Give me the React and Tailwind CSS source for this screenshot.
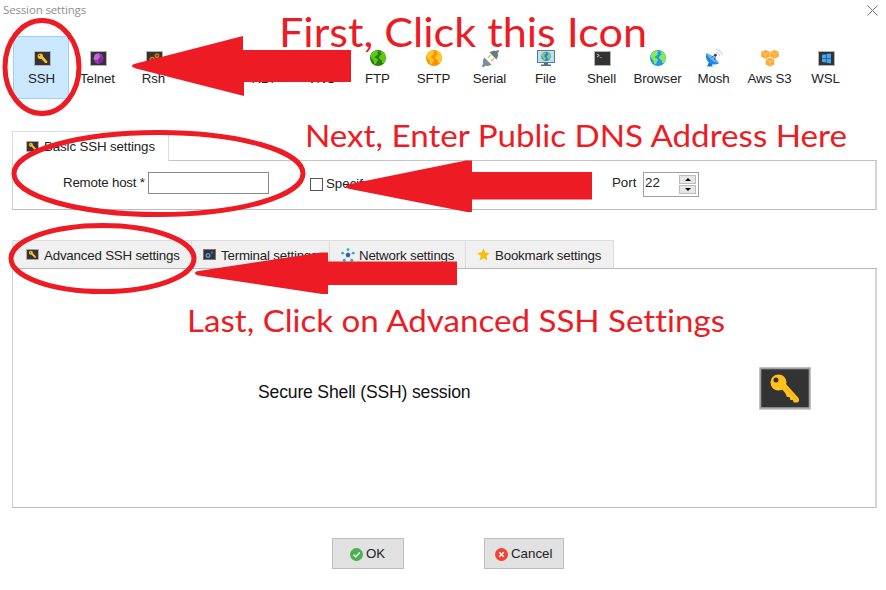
import React from "react";

const TERM = "#333333";

function KeyBox({ className }) {
  return (
    <svg className={className} viewBox="0 0 17 15">
      <rect x="0.5" y="0.5" width="16" height="14" fill={TERM} stroke="#b4b4b4" />
      <circle cx="6.3" cy="5.2" r="2.7" fill="#ffc11e" />
      <path d="M6.6 7 8.6 5 13.4 10.4 13 12 11.2 12Z" fill="#ffc11e" />
      <circle cx="5.5" cy="4.4" r="0.7" fill={TERM} />
    </svg>
  );
}

function DarkBox({ children }) {
  return (
    <svg className="h-[15px] w-[17px]" viewBox="0 0 17 15">
      <rect x="0.5" y="0.5" width="16" height="14" fill={TERM} stroke="#b4b4b4" />
      {children}
    </svg>
  );
}

function Globe({ sea, land }) {
  return (
    <svg className="h-4 w-4" viewBox="0 0 16 16">
      <circle cx="8" cy="8" r="8" fill={sea} />
      <path
        d="M1.2 4.2C2.6 1.8 4.6.6 6.8.2L8.4 1.4 7.4 3 8 4.4 5.8 6 4.4 7.6 7 8.4 8 10.2 6.6 12 6 14.6 4.2 13.4 3.4 10.6 1.6 8.6.5 6.6ZM10.4 1 12.6 1.4 14.8 3.8 15.9 7 15.4 10.4 13.6 13.4 12 12.8 11.8 10 9.8 9.2 9 7.2 10.2 5.2 12 4.2 10.8 3Z"
        fill={land}
      />
    </svg>
  );
}

const Gem = () => (
  <DarkBox>
    <path d="M8.5 2 12 3.4 13.6 7.5 12 11.4 8.5 13.2 5 11.4 3.6 7.5 5 3.4Z" fill="#9c3ab8" />
    <path d="M8.5 2 10 6 8 9 4.2 8.4 3.6 7.5 5 3.4Z" fill="#c06ad8" />
    <path d="M10 6 13.6 7.5 12 11.4 8.5 13.2 8 9Z" fill="#8424a2" />
  </DarkBox>
);

const Gears = () => (
  <DarkBox>
    <g fill="none" stroke="#e07b16" strokeWidth="1.5">
      <circle cx="6.2" cy="8.4" r="2" />
      <circle cx="11" cy="4.8" r="1.7" />
      <circle cx="11" cy="11" r="1.4" />
    </g>
  </DarkBox>
);

const Plug = () => (
  <svg className="h-[17px] w-[17px]" viewBox="0 0 17 17">
    <path d="M16.6.4 13 4M.4 16.6 4 13" stroke="#78909c" strokeWidth="2.6" />
    <path d="M7.6 2.6C10.6.2 13.2.4 14.9 2.1S16.6 6.6 14.4 9.4Z" fill="#607d8b" />
    <path d="M2.4 7.6 9.4 14.6C6.6 16.6 3.8 16.4 2.1 14.9S.4 10.4 2.4 7.6Z" fill="#78909c" />
    <path d="M8.6 5 6 7.8M12 8.4 9.2 11.2" stroke="#ffb74d" strokeWidth="1.6" />
  </svg>
);

const Monitor = () => (
  <svg className="h-4 w-[18px]" viewBox="0 0 18 16">
    <rect x="0.5" y="0.5" width="17" height="12" fill="#bbdefb" stroke="#607d8b" />
    <path d="M7 13H11V14.5H14V16H4V14.5H7Z" fill="#546e7a" />
    <circle cx="9" cy="6.4" r="4.7" fill="#1e88e5" />
    <path d="M5.5 3.3 8.6 2 9 3.5 7.2 5 7.6 7.2 9.2 8 7.8 10.3 6.2 9.4 5.7 7 4.4 6Z M10.2 2.3 12.9 4.2 13.4 7 12 9.8 10.6 8.4 9.8 6.2 11.4 4.8Z" fill="#9ccc45" />
  </svg>
);

const Shell = () => (
  <DarkBox>
    <path d="M3 3 5.2 4.5 3 6" fill="none" stroke="#dddddd" strokeWidth="0.9" />
    <path d="M5.6 6.5H8" stroke="#999999" strokeWidth="0.7" />
  </DarkBox>
);

const Dish = () => (
  <svg className="h-[18px] w-[18px]" viewBox="0 0 18 18">
    <path d="M4.5 12 2 17.5H7.5L7 13Z" fill="#1976d2" />
    <path d="M1.6 4.2C0 8 1.6 12 4.6 14S11 16 14 14.2Z" fill="#1e88e5" />
    <path d="M1.6 4.2C5 4.5 13 10.5 14 14.2 10 14 3.5 9.5 1.6 4.2Z" fill="#64b5f6" />
    <path d="M6.5 8.4 10.5 5.6 9.6 11" fill="none" stroke="#455a64" strokeWidth="1" />
    <circle cx="10.4" cy="6.2" r="1.4" fill="#37474f" />
    <path d="M11 3.4C13 3.6 14.2 5 14.4 7M11.4.8C14.8 1 16.8 3.2 17.2 6.4" fill="none" stroke="#a9d2f7" strokeWidth="1" />
  </svg>
);

function Cube({ x, y }) {
  return (
    <g transform={`translate(${x} ${y})`}>
      <path d="M4.5 0 8.8 1.8V6.8L4.5 8.8.2 6.8V1.8Z" fill="#ffab33" />
      <path d="M1.4 2.6 4.5 4 7.6 2.6M4.5 4V7.4" fill="none" stroke="#ffdba6" strokeWidth="0.6" />
    </g>
  );
}

const Cubes = () => (
  <svg className="h-[17px] w-[18px]" viewBox="0 0 18 17">
    <Cube x={0} y={0} />
    <Cube x={9} y={0} />
    <Cube x={4.5} y={7.8} />
  </svg>
);

const Windows = () => (
  <DarkBox>
    <path d="M4 3.8 7.9 3.2V7H4ZM8.5 3.1 13 2.4V7H8.5ZM4 7.6H7.9V11.6L4 11ZM8.5 7.6H13V12.4L8.5 11.7Z" fill="#42a5f5" />
  </DarkBox>
);

const Network = () => (
  <svg className="h-[14px] w-[14px]" viewBox="0 0 14 14">
    <path d="M7 7V1.5M7 7 1.5 5M7 7 12.5 5M7 7 3.5 12M7 7 10.5 12" stroke="#a6c4e8" strokeWidth="0.7" />
    <circle cx="7" cy="7" r="2.2" fill="#3f51b5" />
    <g fill="#16b8d4">
      <circle cx="7" cy="1.6" r="1.4" />
      <circle cx="1.6" cy="5.2" r="1.4" />
      <circle cx="12.3" cy="5.2" r="1.4" />
      <circle cx="3.2" cy="12.2" r="1.5" />
      <circle cx="10.8" cy="12.2" r="1.5" />
    </g>
  </svg>
);

const Star = () => (
  <svg className="h-[13px] w-[13px]" viewBox="0 0 13 13">
    <path d="M6.5.3 8.3 4.4 12.8 4.9 9.4 7.9 10.4 12.5 6.5 10.2 2.6 12.5 3.6 7.9.2 4.9 4.7 4.4Z" fill="#f4c20d" />
  </svg>
);

const TermGears = () => (
  <svg className="h-[11px] w-[13px]" viewBox="0 0 13 11">
    <rect x="0.5" y="0.5" width="12" height="10" fill={TERM} stroke="#777777" />
    <circle cx="5" cy="6.4" r="1.8" fill="none" stroke="#5b9be0" strokeWidth="1.4" />
    <circle cx="9" cy="3.6" r="1.2" fill="#4277b8" />
  </svg>
);

const sessions = [
  ["SSH", <KeyBox className="h-[15px] w-[17px]" />],
  ["Telnet", <Gem />],
  ["Rsh", <Gears />],
  ["Xdmcp", <DarkBox />],
  ["RDP", <DarkBox />],
  ["VNC", <DarkBox />],
  ["FTP", <Globe sea="#2e7d0e" land="#5ccb12" />],
  ["SFTP", <Globe sea="#ff8f00" land="#ffc928" />],
  ["Serial", <Plug />],
  ["File", <Monitor />],
  ["Shell", <Shell />],
  ["Browser", <Globe sea="#2196f3" land="#8bea4c" />],
  ["Mosh", <Dish />],
  ["Aws S3", <Cubes />],
  ["WSL", <Windows />],
];

function Tab({ icon, label, className }) {
  return (
    <div className={`flex h-7 items-center border-t border-r border-[#dcdcdc] bg-[#f0f0f0] ${className}`}>
      <span className="flex w-[18px] shrink-0 items-center">{icon}</span>
      <span className="pt-[2px] tracking-[-0.19px] whitespace-nowrap">{label}</span>
    </div>
  );
}

function Annotations() {
  return (
    <svg className="pointer-events-none absolute inset-0 h-[590px] w-[886px]" viewBox="0 0 886 590">
      <g fill="none" stroke="#ed1c24" strokeWidth="5">
        <ellipse cx="42" cy="67" rx="37" ry="46.5" />
        <ellipse cx="158.5" cy="173.5" rx="144.5" ry="41" />
        <ellipse cx="102.5" cy="258.5" rx="91.5" ry="33" />
      </g>
      <g fill="#ed1c24">
        <path d="M132 66Q132 64.6 136 63.6L243 36V50H351V82H244V96L136 68.4Q132 67.4 132 66Z" />
        <path d="M346 186.5Q346 184.8 350 184L466 160.4H472V172H592V199.5H472V212H467L350 189Q346 188.2 346 186.5Z" />
        <path d="M195 273Q195 271.5 198.5 271L321 252.5H328V261.5H457V285H328V294H322L198.5 275.5Q195 274.8 195 273Z" />
      </g>
      <g fill="#ed1c24" fontFamily="Lato, 'Open Sans', sans-serif" className="[font-variant-ligatures:none]">
        <text x="279" y="47" fontSize="40.5" textLength="368" lengthAdjust="spacingAndGlyphs">First, Click this Icon</text>
        <text x="305" y="147" fontSize="31.5" textLength="542" lengthAdjust="spacingAndGlyphs">Next, Enter Public DNS Address Here</text>
        <text x="187" y="332" fontSize="31.5" textLength="538" lengthAdjust="spacingAndGlyphs">Last, Click on Advanced SSH Settings</text>
      </g>
    </svg>
  );
}

export default function App() {
  return (
    <div className="relative flex h-[590px] w-[886px] flex-col overflow-hidden bg-white font-['Liberation_Sans',Arial,sans-serif] text-[13.3px] text-[#222]">
      <header className="flex h-9 shrink-0 items-start justify-between pr-[8px] pl-[3px]">
        <span className="mt-[2px] font-['Open_Sans','Noto_Sans',sans-serif] text-[11.5px] leading-4 tracking-[-0.15px] text-[#8f8f8f]">Session settings</span>
        <svg className="mt-[5px] h-[11px] w-[11px]" viewBox="0 0 11 11">
          <path d="M.5.5 10.5 10.5M10.5.5.5 10.5" stroke="#777" strokeWidth="1" />
        </svg>
      </header>

      <nav className="flex h-[63px] shrink-0 pl-[13px]">
        {sessions.map(([name, icon], i) => (
          <div
            key={name}
            className={`flex w-14 shrink-0 flex-col items-center border pt-[11px] ${i === 0 ? "border-[#99d1ff] bg-[#cce8ff]" : "border-transparent"}`}
          >
            <span className="flex h-5 items-center pl-[2px]">{icon}</span>
            <span className={`mt-[3px] pl-[1px] leading-4 whitespace-nowrap ${name === "Xdmcp" ? "tracking-[-1.4px]" : "tracking-[-0.1px]"}`}>{name}</span>
          </div>
        ))}
      </nav>

      <section className="mx-[12px] mt-8 flex h-[79px] w-[865px] shrink-0 flex-col">
        <div className="flex h-[30px] shrink-0">
          <div className="flex w-[157px] items-center border-t border-r border-l border-[#dcdcdc] pl-[13px]">
            <KeyBox className="mr-[5px] h-[11px] w-[13px]" />
            <span className="tracking-[-0.12px] whitespace-nowrap">Basic SSH settings</span>
          </div>
          <div className="flex-1 border-b border-[#c4c4c4]" />
        </div>
        <div className="flex flex-1 items-start border-r-2 border-b border-l border-r-[#d6d6d6] border-b-[#bcbcbc] border-l-[#d0d0d0]">
          <label className="mt-[14px] ml-[50px] w-[85px] leading-4 tracking-[-0.19px] whitespace-nowrap">Remote host *</label>
          <div className="mt-[11px] h-[22px] w-[121px] border border-[#8a8a8a] bg-white" />
          <div className="mt-[17px] ml-[41px] h-[13px] w-[13px] border border-[#555] bg-white" />
          <span className="mt-[15px] ml-[3px] w-[286px] leading-4 whitespace-nowrap">Specify username</span>
          <span className="mt-[14px] w-[31px] leading-4">Port</span>
          <div className="mt-[11px] flex h-[25px] w-[56px] justify-between border border-[#a0a0a0] bg-white pl-[1px]">
            <span className="mt-[2px] leading-4">22</span>
            <div className="mt-[2px] mr-[2px] flex w-[17px] flex-col gap-[1px]">
              <div className="flex h-[9px] items-center justify-center border border-[#bbb] bg-[#e6e6e6]">
                <svg className="h-[3px] w-[6px]" viewBox="0 0 6 3"><path d="M0 3 3 0 6 3Z" fill="#000" /></svg>
              </div>
              <div className="flex h-[9px] items-center justify-center border border-[#bbb] bg-[#e6e6e6]">
                <svg className="h-[3px] w-[6px]" viewBox="0 0 6 3"><path d="M0 0 3 3 6 0Z" fill="#000" /></svg>
              </div>
            </div>
          </div>
        </div>
      </section>

      <section className="mx-[12px] mt-[30px] flex h-[268px] w-[865px] shrink-0 flex-col">
        <div className="flex h-[29px] shrink-0 border-b border-[#b8b8b8]">
          <Tab className="w-[180px] border-l pl-[13px]" icon={<KeyBox className="h-[11px] w-[13px]" />} label="Advanced SSH settings" />
          <Tab className="w-[138px] pl-[11px]" icon={<TermGears />} label="Terminal settings" />
          <Tab className="w-[136px] pl-[11px]" icon={<Network />} label="Network settings" />
          <Tab className="w-[148px] pl-[11px]" icon={<Star />} label="Bookmark settings" />
        </div>
        <div className="flex flex-1 items-start border-r-2 border-b border-l border-r-[#d6d6d6] border-b-[#bcbcbc] border-l-[#d0d0d0]">
          <h1 className="mt-[113px] ml-[245px] w-[501px] text-[17.6px] leading-5 tracking-[-0.18px] text-[#111]">Secure Shell (SSH) session</h1>
          <svg className="mt-[98px] h-[43px] w-[52px]" viewBox="0 0 52 43">
            <rect width="52" height="43" fill="#d0d0d0" />
            <rect x="1.5" y="1.5" width="49" height="39.5" fill={TERM} stroke="#a0a0a0" strokeWidth="1.6" />
            <path d="M22 21 27 17 39.5 31Q41 34 38.5 35.5H34.5L34 33H31.5L30.5 30H28L26.5 26.5Z" fill="#ffc11e" />
            <path d="M27 21 38 33" stroke="#e7a913" strokeWidth="1" />
            <circle cx="19.5" cy="15.5" r="8" fill="#ffc11e" />
            <circle cx="17" cy="13" r="2.5" fill={TERM} />
          </svg>
        </div>
      </section>

      <footer className="mt-[30px] flex h-[32px] shrink-0 gap-[80px] pl-[332px]">
        <button className="flex h-[31px] w-[72px] items-center border border-[#bcbcbc] bg-[#e1e1e1] pt-px pl-[17px]">
          <svg className="mr-[3px] h-[13px] w-[13px]" viewBox="0 0 13 13">
            <circle cx="6.5" cy="6.5" r="6.5" fill="#4caf50" />
            <path d="M3.5 6.7 5.7 8.8 9.7 4.6" fill="none" stroke="#fff" strokeWidth="1.5" />
          </svg>
          OK
        </button>
        <button className="flex h-[31px] w-[80px] items-center border border-[#bcbcbc] bg-[#e1e1e1] pt-px pl-[10px]">
          <svg className="mr-[3px] h-[13px] w-[13px] shrink-0" viewBox="0 0 13 13">
            <circle cx="6.5" cy="6.5" r="6.5" fill="#f44336" />
            <path d="M4.3 4.3 8.7 8.7M8.7 4.3 4.3 8.7" stroke="#fff" strokeWidth="1.6" />
          </svg>
          Cancel
        </button>
      </footer>

      <Annotations />
    </div>
  );
}
